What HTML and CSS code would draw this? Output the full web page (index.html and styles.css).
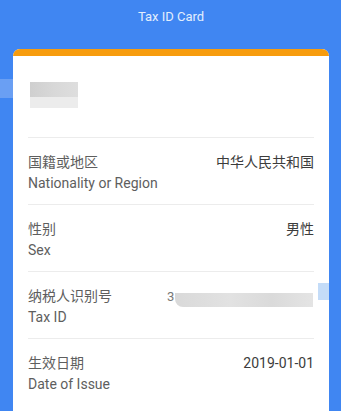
FILE: index.html
```html
<!DOCTYPE html>
<html>
<head>
<meta charset="utf-8">
<link rel="stylesheet" href="styles.css">
</head>
<body>
<div class="page">
  <div class="title">Tax ID Card</div>
  <div class="side-tab"></div>
  <div class="card">
    <div class="card-top"></div>
    <div class="name-area">
      <div class="name-blur"><div class="nb-top"></div><div class="nb-bottom"></div></div>
    </div>
    <div class="row">
      <div class="labels"><div class="cn">国籍或地区</div><div class="en">Nationality or Region</div></div>
      <div class="value">中华人民共和国</div>
    </div>
    <div class="row">
      <div class="labels"><div class="cn">性别</div><div class="en">Sex</div></div>
      <div class="value">男性</div>
    </div>
    <div class="row">
      <div class="labels"><div class="cn">纳税人识别号</div><div class="en">Tax ID</div></div>
      <div class="value taxid"><span class="three">3</span><span class="id-blur"></span><span class="id-tab"></span></div>
    </div>
    <div class="row last">
      <div class="labels"><div class="cn">生效日期</div><div class="en">Date of Issue</div></div>
      <div class="value">2019-01-01</div>
    </div>
  </div>
</div>
</body>
</html>
```
FILE: styles.css
```css
* { box-sizing: border-box; }
html, body { margin: 0; padding: 0; }
body {
  width: 341px;
  height: 411px;
  overflow: hidden;
  background: #4086f2;
  font-family: Roboto, "Noto Sans CJK SC", sans-serif;
}
.page {
  position: relative;
  padding: 0 12px 0 13px;
}
.title {
  height: 49px;
  padding-top: 9px;
  text-align: center;
  color: #e3eefd;
  font-size: 13px;
  line-height: 16px;
}
.side-tab {
  position: absolute;
  left: 0;
  top: 79px;
  width: 13px;
  height: 19px;
  background: #6a9ff3;
}
.card {
  background: #fff;
  border-radius: 7px 7px 0 0;
  overflow: hidden;
  height: 380px;
}
.card-top {
  height: 7px;
  background: #f79c0e;
}
.name-area {
  height: 82px;
  padding: 26px 0 0 2px;
  margin: 0 15px;
  border-bottom: 1px solid #ececec;
}
.name-blur { width: 48px; }
.nb-top { height: 15px; background: linear-gradient(90deg, #cfcfcf, #d8d8d8 50%, #dedede); }
.nb-bottom { height: 11px; background: #ececec; }
.row {
  margin: 0 15px;
  height: 67px;
  border-bottom: 1px solid #ececec;
  display: flex;
  justify-content: space-between;
  align-items: flex-start;
  padding-top: 15px;
}
.row.last { border-bottom: none; }
.cn {
  font-size: 14px;
  line-height: 18px;
  color: #5e5e5e;
}
.en {
  font-size: 14px;
  line-height: 18px;
  margin-top: 3px;
  color: #5e5e5e;
}
.value {
  font-size: 14px;
  line-height: 18px;
  color: #3c3c3c;
}
.taxid {
  position: relative;
  width: 147px;
  display: flex;
  align-items: center;
  color: #777;
}
.three { font-size: 13px; margin-right: 1px; }
.id-blur {
  display: block;
  width: 138px;
  height: 14px;
  margin-top: 6px;
  border-radius: 0 0 0 8px;
  background: linear-gradient(90deg, #d9d9d9, #e2e2e2 40%, #dadada 70%, #e4e4e4);
}
.id-tab {
  position: absolute;
  right: -19px;
  top: -4px;
  width: 15px;
  height: 17px;
  background: #c4dcf8;
}
```
